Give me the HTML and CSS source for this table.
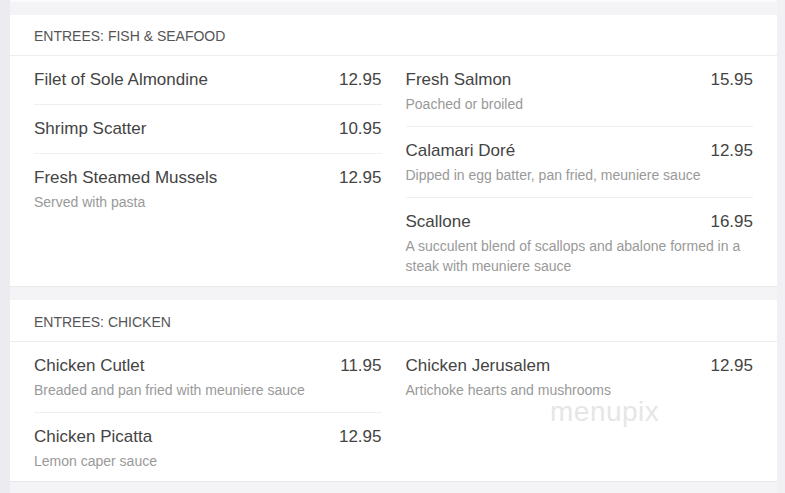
FILE: index.html
```html
<!DOCTYPE html>
<html>
<head>
<meta charset="utf-8">
<link rel="stylesheet" href="styles.css">
</head>
<body>
<div class="page">
  <div class="prev-edge"></div>
  <section class="card">
    <h2 class="card-head">ENTREES: FISH &amp; SEAFOOD</h2>
    <div class="cols">
      <div class="col">
        <div class="item"><div class="row"><span>Filet of Sole Almondine</span><span>12.95</span></div></div>
        <div class="item"><div class="row"><span>Shrimp Scatter</span><span>10.95</span></div></div>
        <div class="item"><div class="row"><span>Fresh Steamed Mussels</span><span>12.95</span></div><p class="desc">Served with pasta</p></div>
      </div>
      <div class="col">
        <div class="item"><div class="row"><span>Fresh Salmon</span><span>15.95</span></div><p class="desc">Poached or broiled</p></div>
        <div class="item"><div class="row"><span>Calamari Doré</span><span>12.95</span></div><p class="desc">Dipped in egg batter, pan fried, meuniere sauce</p></div>
        <div class="item"><div class="row"><span>Scallone</span><span>16.95</span></div><p class="desc">A succulent blend of scallops and abalone formed in a steak with meuniere sauce</p></div>
      </div>
    </div>
  </section>
  <section class="card">
    <h2 class="card-head">ENTREES: CHICKEN</h2>
    <div class="cols">
      <div class="col">
        <div class="item"><div class="row"><span>Chicken Cutlet</span><span>11.95</span></div><p class="desc">Breaded and pan fried with meuniere sauce</p></div>
        <div class="item"><div class="row"><span>Chicken Picatta</span><span>12.95</span></div><p class="desc">Lemon caper sauce</p></div>
      </div>
      <div class="col">
        <div class="item"><div class="row"><span>Chicken Jerusalem</span><span>12.95</span></div><p class="desc">Artichoke hearts and mushrooms</p></div>
      </div>
    </div>
    <div class="watermark">menupix</div>
  </section>
</div>
</body>
</html>
```

FILE: styles.css
```css
html, body {
  margin: 0;
  padding: 0;
}
body {
  background: #f4f4f7;
  font-family: "Liberation Sans", Arial, sans-serif;
  width: 785px;
  height: 493px;
  overflow: hidden;
}
.page {
  border-left: 10px solid #ebebf0;
  border-right: 8px solid #f0f0f5;
  min-height: 493px;
  box-sizing: border-box;
}
.prev-edge {
  height: 2px;
  background: #fafafc;
  margin-bottom: 13px;
}
.card {
  position: relative;
  background: #fff;
  border-bottom: 1px solid #e8e8ec;
  margin-bottom: 13px;
}
.card-head {
  margin: 0;
  padding: 0 24px;
  height: 40px;
  line-height: 43px;
  font-size: 14px;
  font-weight: normal;
  color: #555;
  border-bottom: 1px solid #ededf0;
}
.card + .card .card-head {
  height: 41px;
  line-height: 44px;
}
.cols {
  display: grid;
  grid-template-columns: 1fr 1fr;
  column-gap: 24px;
  padding: 0 24px;
}
.item {
  padding: 13px 0 11px;
  border-bottom: 1px solid #efeff1;
}
.item:last-child {
  border-bottom: none;
  padding-bottom: 10px;
}
.row {
  display: flex;
  justify-content: space-between;
  font-size: 17px;
  line-height: 22px;
  color: #444;
  margin-bottom: 2px;
}
.desc {
  margin: 3px 0 1px;
  font-size: 14px;
  line-height: 20px;
  color: #999;
}
.item:last-child .desc {
  margin-bottom: 0;
}
.watermark {
  position: absolute;
  left: 540px;
  top: 96px;
  font-family: "Liberation Sans", sans-serif;
  font-size: 28px;
  letter-spacing: 0.5px;
  color: #e6e6e6;
}
```
